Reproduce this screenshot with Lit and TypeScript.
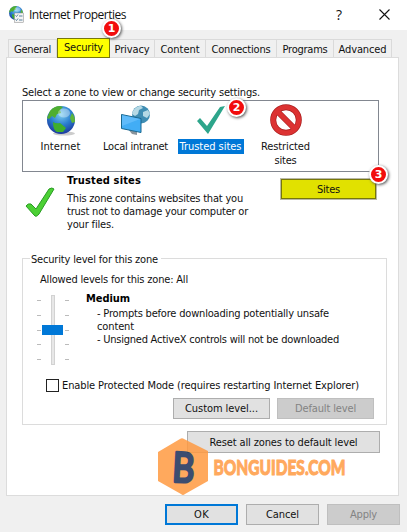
import { LitElement, html, css, svg } from "lit";
import { customElement, property } from "lit/decorators.js";

/** One line of text spread over a given width. */
@customElement("fit-text")
class FitText extends LitElement {
  @property() text = "";
  @property({ type: Number }) w = 0;
  static styles = css`
    :host { display: block; white-space: pre; flex: none; line-height: 13px; }
    span { display: inline-block; }
  `;
  render() {
    return html`<span>${this.text}</span>`;
  }
  updated() {
    const s = this.renderRoot.querySelector("span") as HTMLElement;
    s.style.letterSpacing = "0";
    const n = s.getBoundingClientRect().width;
    s.style.letterSpacing = (this.w - n) / this.text.length + "px";
    this.style.width = this.w + "px";
  }
}

const t = (text: string, w: number, cls = "") => html`<fit-text class=${cls} .text=${text} .w=${w}></fit-text>`;

const globe = svg`
  <circle cx="16" cy="16" r="14" fill="url(#sea)"/>
  <path d="M5 7Q9 2 15 2L18 3 15 6 16 9 12 10 10 14 7 12 4 15 2 14Z" fill="#4fae30"/>
  <path d="M8 18Q11 20 15 19L21 24 18 28 12 28Q8 26 8 18Z" fill="#3fae2d"/>
  <path d="M27 9Q30 12 30 18L27 19 25 14Z" fill="#5cb53a"/>
  <ellipse cx="19" cy="9" rx="6" ry="4.5" fill="#fff" opacity=".35"/>`;
const sea = svg`<defs><radialGradient id="sea" cx=".5" cy=".3" r=".75">
  <stop offset="0" stop-color="#7fcff0"/><stop offset=".5" stop-color="#2b7fd0"/><stop offset="1" stop-color="#1a2f96"/>
</radialGradient></defs>`;

@customElement("app-root")
class AppRoot extends LitElement {
  static styles = css`
    :host { display: block; width: 407px; height: 532px; overflow: hidden; position: relative; background: #f0f0f0;
      font: 11px/13px "DejaVu Sans Condensed", "Noto Sans", sans-serif; color: #111; }
    * { box-sizing: border-box; }
    svg { display: block; flex: none; overflow: visible; }
    .title { height: 30px; background: #fff; display: flex; align-items: center; padding: 0 17px 2px 8px; }
    .title fit-text { font: 12px "Open Sans", sans-serif; margin-left: 5px; flex: 1; }
    .title .q { font-size: 14px; margin: 0; flex: none; }
    .title .x { margin-left: 37px; }
    .tabs { display: flex; height: 27px; padding: 9px 0 0 8px; }
    .tab { height: 18px; border: 1px solid #dadada; border-bottom: 0; border-left: 0; display: flex; justify-content: center; padding-top: 3px; }
    .tab.first { border-left: 1px solid #dadada; }
    .tab.on { height: 20px; margin-top: -1px; background: #ff0; border: 1px solid #77770a; z-index: 1; padding-top: 2px; }
    .panel { margin-left: 6px; width: 393px; height: 439px; background: #fff; border: 1px solid #dcdcdc; padding: 28px 0 0 15px; }
    .zones { display: flex; width: 357px; height: 72px; border: 1px solid #828790; margin-top: 1px; }
    .zone { display: flex; flex-direction: column; align-items: center; width: 75px; padding-top: 3px; }
    .zone svg { margin-bottom: 3px; }
    .lab { height: 15px; padding: 1px 2px 0; }
    .sel { background: #0078d7; color: #fff; }
    .b { font-weight: bold; color: #000; }
    .info { display: flex; height: 86px; }
    .info svg { margin: 15px 0 0 3px; }
    .desc { margin-left: 11px; width: 214px; padding-top: 2px; }
    .desc .b { margin-bottom: 5px; }
    .btn { display: flex; align-items: center; justify-content: center; height: 21px; background: #e1e1e1; border: 1px solid #adadad; flex: none; }
    .off { background: #ccc; border-color: #bfbfbf; color: #838383; }
    .sites { width: 95px; height: 20px; margin-top: 7px; background: #e1e100; border-color: #77770a; box-shadow: 0 0 0 1px #b9b9a8; }
    .group { width: 365px; height: 167px; border: 1px solid #dcdcdc; padding-left: 7px; }
    .legend { margin-top: -6px; background: #fff; width: 131px; padding-left: 1px; height: 14px; }
    .allowed { margin: 6px 0 0 10px; }
    .level { display: flex; margin-top: 6px; height: 87px; padding-left: 7px; }
    .level svg { margin-top: 3px; }
    .rules { margin-left: 15px; }
    .rules .b { margin-bottom: 2px; }
    .rules fit-text:not(.b) { margin-left: 11px; }
    .check { display: flex; align-items: center; margin-left: 16px; height: 13px; }
    .box { width: 13px; height: 13px; border: 1px solid #222; background: #fff; margin-right: 3px; }
    .row { display: flex; gap: 7px; margin: 6px 0 0 143px; }
    .foot { display: flex; gap: 8px; padding: 8px 0 0 165px; }
    .foot .btn { width: 73px; }
    .ok { border: 2px solid #0078d7; }
    .badge { position: absolute; width: 19px; height: 19px; border-radius: 50%; background: #f20d0d; border: 2px solid #fff; color: #fff;
      box-shadow: 1px 1px 3px #555; font: bold 11px/15px "DejaVu Sans", sans-serif; text-align: center; z-index: 2; }
    .b1 { left: 102px; top: 19px; } .b2 { left: 227px; top: 98px; } .b3 { left: 369px; top: 165px; }
    .logo { position: absolute; left: 157px; top: 437px; opacity: .86; }
  `;

  render() {
    const tabs: [string, number, number][] = [["General", 49, 37], ["Security", 53, 39], ["Privacy", 45, 35], ["Content", 51, 39],
      ["Connections", 71, 59], ["Programs", 57, 45], ["Advanced", 58, 48]];
    return html`
      <div class="title">
        <svg width="16" height="18" viewBox="0 0 32 36">${sea}${globe}
          <rect x="13" y="16" width="18" height="19" fill="#f4f4f4" stroke="#888"/>
          <path d="M15 21l2 2 3-4M15 29l2 2 3-4M22 22h7M22 30h7" stroke="#368" stroke-width="1.6" fill="none"/></svg>
        ${t("Internet Properties", 97)}
        ${t("?", 6, "q")}
        <svg class="x" width="11" height="11" viewBox="0 0 11 11"><path d="M.5.5l10 10M10.5.5l-10 10" stroke="#111" stroke-width="1.1"/></svg>
      </div>
      <div class="tabs">${tabs.map(([n, w, tw], i) => html`
        <div class="tab ${i === 1 ? "on" : i === 0 ? "first" : ""}" style="width:${w}px">${t(n, tw)}</div>`)}</div>
      <div class="panel">
        ${t("Select a zone to view or change security settings.", 238)}
        <div class="zones">
          <div class="zone"><svg width="32" height="32" viewBox="0 0 32 32">${sea}<ellipse cx="19" cy="29.5" rx="11" ry="2" fill="#ccc"/>${globe}</svg><div class="lab">${t("Internet", 40)}</div></div>
          <div class="zone"><svg width="32" height="32" viewBox="0 0 32 32">
            <g transform="translate(10 1)"><circle cx="11" cy="9.500" r="9" fill="#3f8db3"/><path d="M3 6Q6 1 11 .7L13 3 9 5 8 9 5 11 2 9ZM13 7L18 5 20 9 17 13 13 11Z" fill="#b5d9e5"/></g>
            <path d="M8 25L17 28V31L12 30Z" fill="#8a949c"/>
            <path d="M1.500 10.500L21 14.500V28.500L1.500 24.500Z" fill="#42adf5" stroke="#17678f"/><path d="M2 11L20 15 2 22Z" fill="#7bcaff" opacity=".5"/></svg>
            <div class="lab">${t("Local intranet", 65)}</div></div>
          <div class="zone"><svg width="32" height="32" viewBox="0 0 32 32"><path d="M2 17L5 14 12 22 25 3 30 2 13 30Z" fill="#2da58b"/></svg>
            <div class="lab sel">${t("Trusted sites", 62)}</div></div>
          <div class="zone"><svg width="32" height="32" viewBox="0 0 32 32"><g fill="none" stroke="#a81c1c" stroke-width="6"><circle cx="16" cy="16" r="12.800"/><path d="M7 7L25 25"/></g>
            <g fill="none" stroke="#dc3232" stroke-width="4.600"><circle cx="16" cy="16" r="12.800"/><path d="M7 7L25 25"/></g></svg>
            <div class="lab">${t("Restricted", 49)}</div>${t("sites", 22)}</div>
        </div>
        <div class="info">
          <svg width="31" height="31" viewBox="0 0 31 31"><path d="M1 19Q3 16 6 17L11 22 24 2Q27 0 29 2L14 27Q11 31 9 28Z" fill="#4bd034" stroke="#2a9b24"/></svg>
          <div class="desc">${t("Trusted sites", 74, "b")}
            ${t("This zone contains websites that you", 176)}${t("trust not to damage your computer or", 181)}${t("your files.", 47)}</div>
          <div class="btn sites">${t("Sites", 23)}</div>
        </div>
        <div class="group">
          <div class="legend">${t("Security level for this zone", 127)}</div>
          <div class="allowed">${t("Allowed levels for this zone: All", 148)}</div>
          <div class="level">
            <svg width="34" height="72" viewBox="0 0 34 72"><rect x="14.5" y=".5" width="3" height="69" fill="#e7e7e7" stroke="#d2d2d2"/>
              <path d="M0 5.500h4M0 20.500h4M0 35.500h4M0 49.500h4M0 64.500h4M28 5.500h4M28 20.500h4M28 35.500h4M28 49.500h4M28 64.500h4" stroke="#bbb"/>
              <rect x="5" y="30" width="21" height="10" fill="#0078d7"/></svg>
            <div class="rules">${t("Medium", 44, "b")}${t("- Prompts before downloading potentially unsafe", 232)}${t("content", 37)}${t("- Unsigned ActiveX controls will not be downloaded", 242)}</div>
          </div>
          <div class="check"><div class="box"></div>${t("Enable Protected Mode (requires restarting Internet Explorer)", 297)}</div>
          <div class="row"><div class="btn" style="width:97px">${t("Custom level...", 73)}</div><div class="btn off" style="width:97px">${t("Default level", 61)}</div></div>
        </div>
        <div class="btn" style="width:193px;height:22px;margin:6px 0 0 165px">${t("Reset all zones to default level", 148)}</div>
      </div>
      <div class="foot"><div class="btn ok">${t("OK", 15)}</div><div class="btn">${t("Cancel", 33)}</div><div class="btn off">${t("Apply", 27)}</div></div>
      <svg class="logo" width="192" height="60" viewBox="0 0 192 60"><path d="M23 2Q25 .5 27 2L51 14V44L28 57Q26 59 24 57L1 44V15Z" fill="#ff9b43"/>
        <text x="15.500" y="45" transform="rotate(3 26 30)" font-family="Lato" font-weight="400" font-size="41" fill="#1d3059" stroke="#1d3059" stroke-width="3" stroke-linejoin="round" textLength="22" lengthAdjust="spacingAndGlyphs">B</text>
        <text x="56.500" y="38" font-family="Lato" font-weight="900" font-size="21" fill="#ff9b43" stroke="#ff9b43" stroke-width="1" textLength="132" lengthAdjust="spacingAndGlyphs">BONGUIDES.COM</text></svg>
      <div class="badge b1">1</div><div class="badge b2">2</div><div class="badge b3">3</div>`;
  }
}
